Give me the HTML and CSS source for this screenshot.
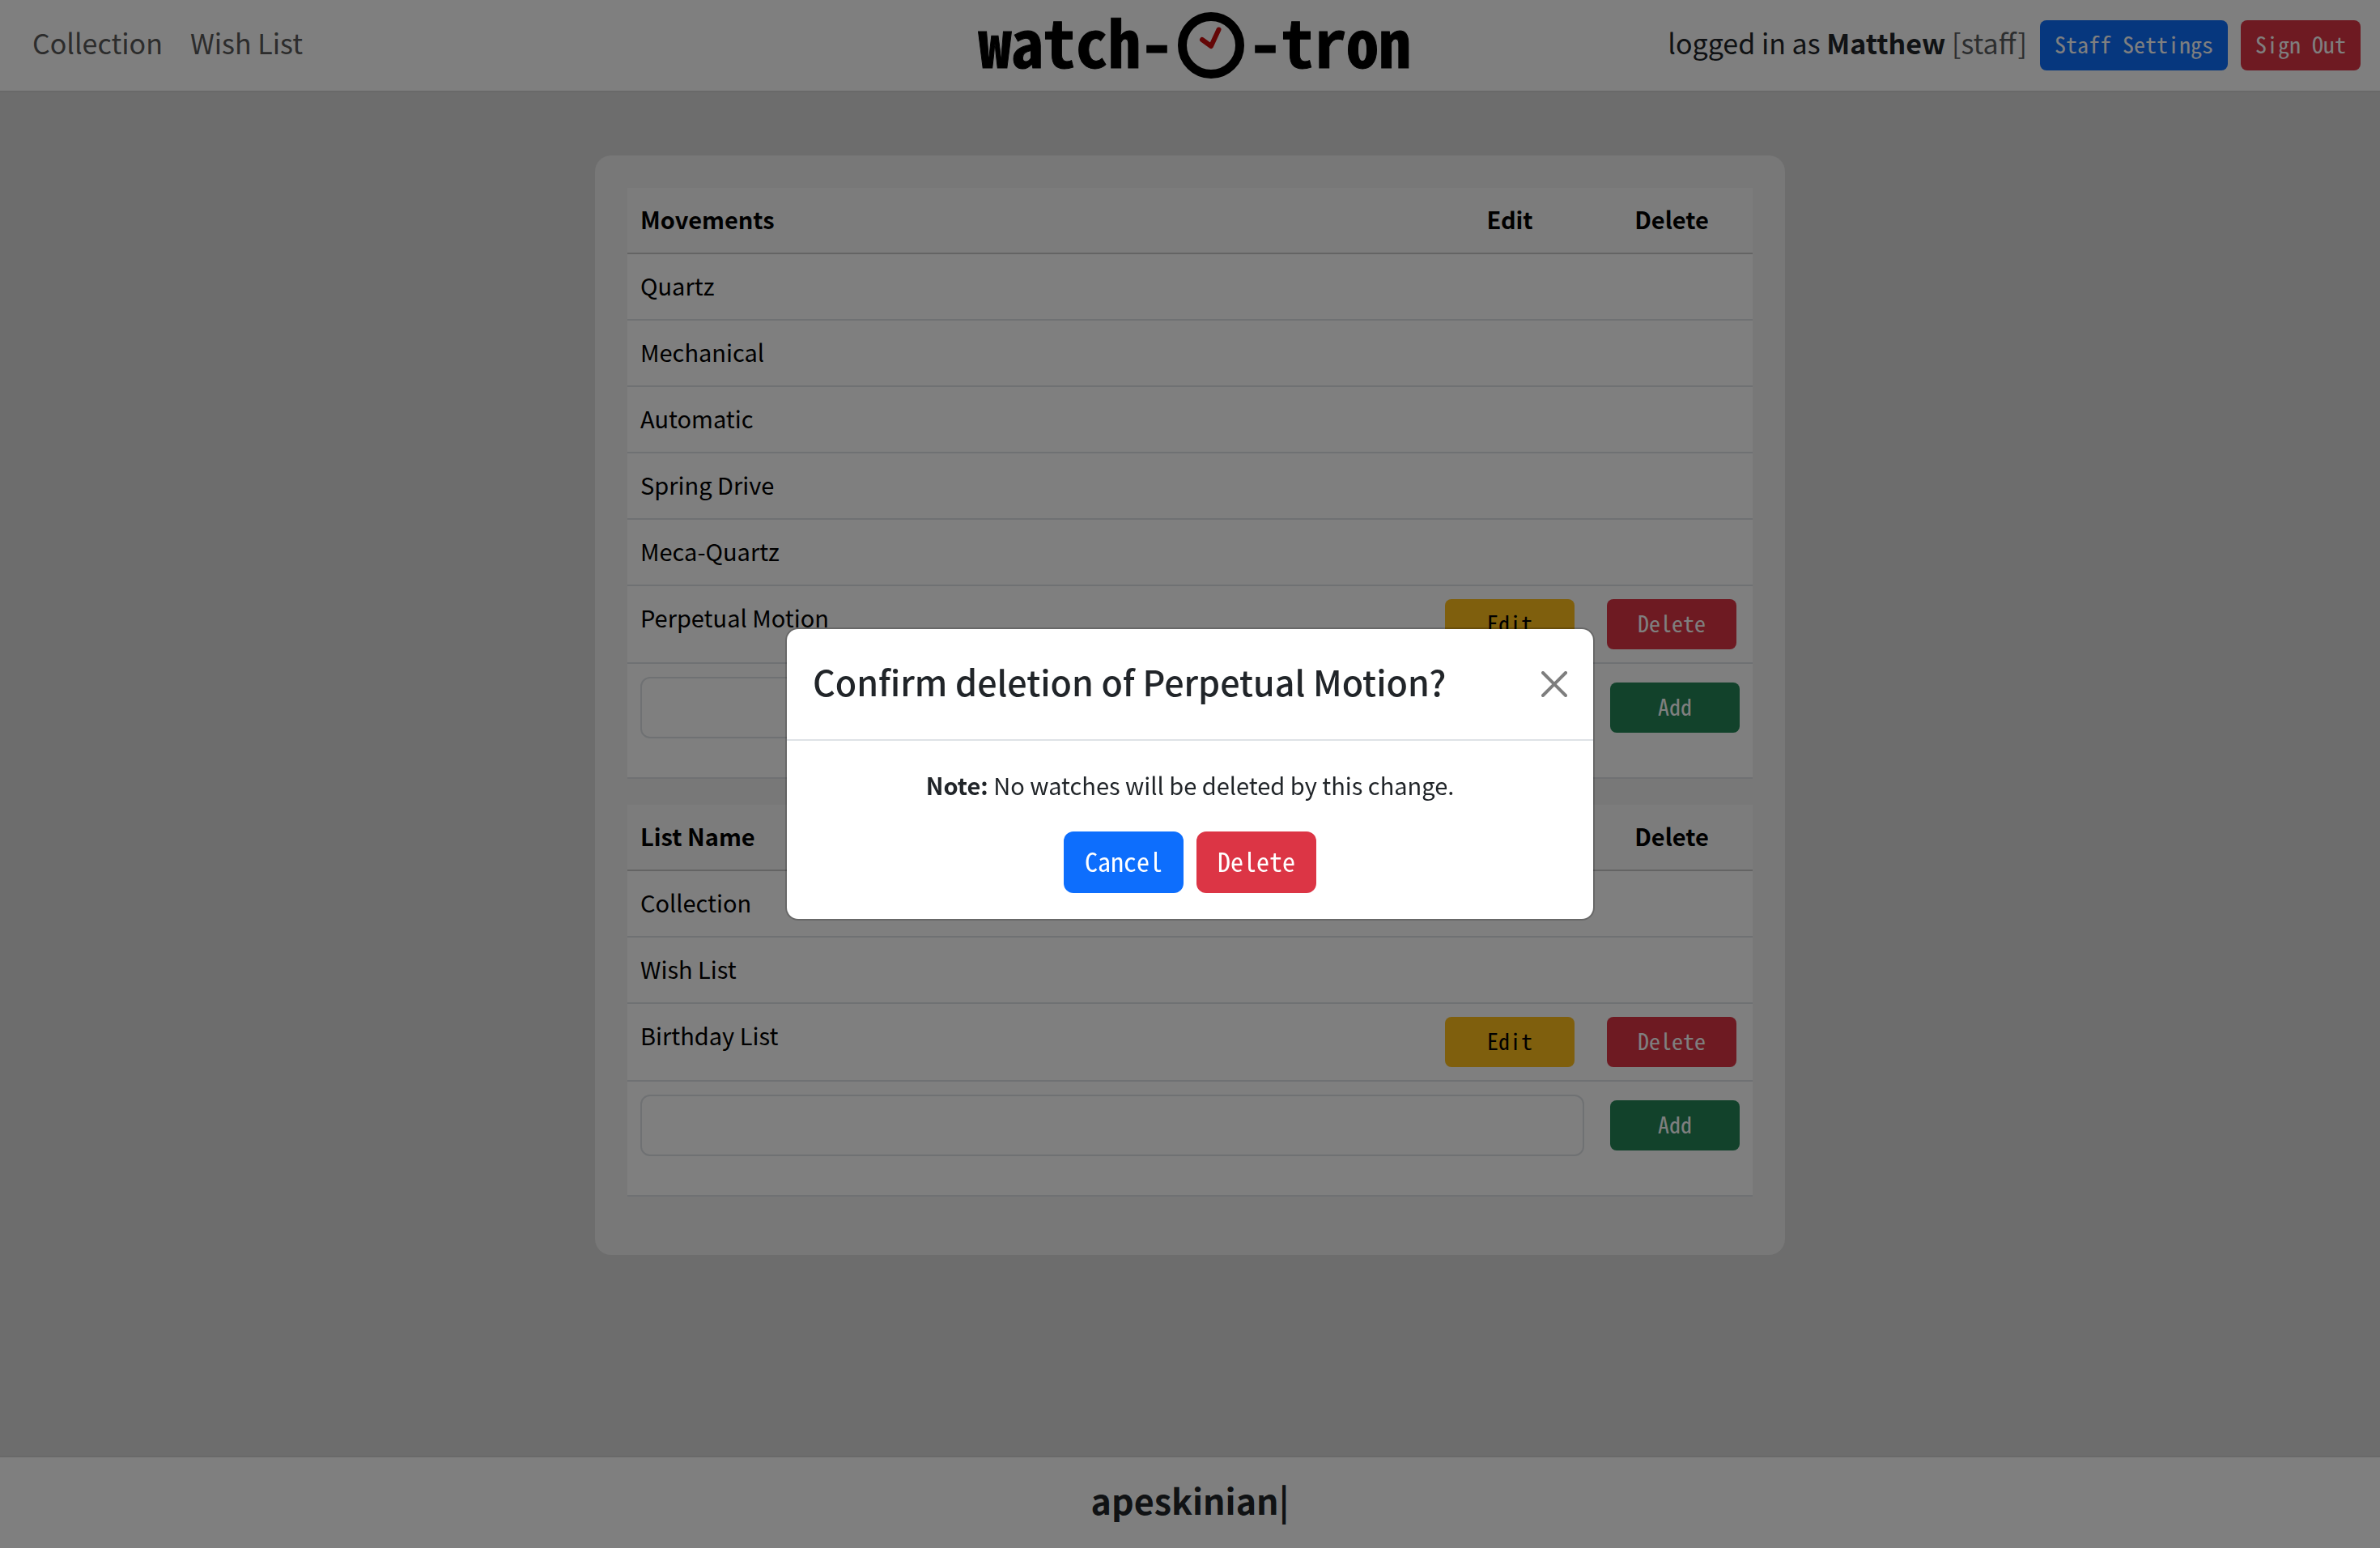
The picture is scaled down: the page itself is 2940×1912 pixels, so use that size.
FILE: index.html
```html
<!DOCTYPE html>
<html lang="en">
<head>
<meta charset="utf-8">
<title>watch-O-tron</title>
<link rel="stylesheet" href="styles.css">
</head>
<body>
<header class="navbar">
  <nav class="nav-links" aria-label="Main">
    <a class="nav-link" href="#collection">Collection</a>
    <a class="nav-link" href="#wish-list">Wish List</a>
  </nav>
  <a class="logo" href="#home" aria-label="watch-O-tron">
    <span class="logo-text">watch-</span>
    <svg class="logo-dial" viewBox="0 0 82 82" aria-hidden="true">
      <circle cx="41" cy="41" r="35.500" fill="none" stroke="#000" stroke-width="11"/>
      <path d="M30 34 41 42 50.500 21.500" fill="none" stroke="#c80f0f" stroke-width="6" stroke-linecap="round" stroke-linejoin="round"/>
    </svg>
    <span class="logo-text">-tron</span>
  </a>
  <div class="account">
    <span class="account-text">logged in as <strong>Matthew</strong> <span class="role">[staff]</span></span>
    <button class="btn btn-sm btn-primary" type="button">Staff Settings</button>
    <button class="btn btn-sm btn-danger" type="button">Sign Out</button>
  </div>
</header>

<main class="content">
  <section class="card">
    <table class="table">
      <thead>
        <tr><th scope="col">Movements</th><th class="action" scope="col">Edit</th><th class="action" scope="col">Delete</th></tr>
      </thead>
      <tbody>
        <tr><td>Quartz</td><td></td><td></td></tr>
        <tr><td>Mechanical</td><td></td><td></td></tr>
        <tr><td>Automatic</td><td></td><td></td></tr>
        <tr><td>Spring Drive</td><td></td><td></td></tr>
        <tr><td>Meca-Quartz</td><td></td><td></td></tr>
        <tr>
          <td>Perpetual Motion</td>
          <td class="action"><button class="btn btn-sm btn-row btn-warning" type="button">Edit</button></td>
          <td class="action"><button class="btn btn-sm btn-row btn-danger" type="button">Delete</button></td>
        </tr>
        <tr>
          <td colspan="3">
            <form class="add-form">
              <input class="text-input" type="text" aria-label="New movement">
              <button class="btn btn-sm btn-row btn-success" type="button">Add</button>
            </form>
          </td>
        </tr>
      </tbody>
    </table>

    <table class="table">
      <thead>
        <tr><th scope="col">List Name</th><th class="action" scope="col">Edit</th><th class="action" scope="col">Delete</th></tr>
      </thead>
      <tbody>
        <tr><td>Collection</td><td></td><td></td></tr>
        <tr><td>Wish List</td><td></td><td></td></tr>
        <tr>
          <td>Birthday List</td>
          <td class="action"><button class="btn btn-sm btn-row btn-warning" type="button">Edit</button></td>
          <td class="action"><button class="btn btn-sm btn-row btn-danger" type="button">Delete</button></td>
        </tr>
        <tr>
          <td colspan="3">
            <form class="add-form">
              <input class="text-input" type="text" aria-label="New list">
              <button class="btn btn-sm btn-row btn-success" type="button">Add</button>
            </form>
          </td>
        </tr>
      </tbody>
    </table>
  </section>
</main>

<footer class="footer"><strong>apeskinian|</strong></footer>

<div class="backdrop">
  <div class="modal" role="dialog" aria-modal="true" aria-labelledby="modal-title">
    <div class="modal-header">
      <h1 class="modal-title" id="modal-title">Confirm deletion of Perpetual Motion?</h1>
      <button class="close" type="button" aria-label="Close">
        <svg viewBox="0 0 16 16" aria-hidden="true"><path fill="#000" d="M.293.293a1 1 0 0 1 1.414 0L8 6.586 14.293.293a1 1 0 1 1 1.414 1.414L9.414 8l6.293 6.293a1 1 0 0 1-1.414 1.414L8 9.414l-6.293 6.293a1 1 0 0 1-1.414-1.414L6.586 8 .293 1.707a1 1 0 0 1 0-1.414z"/></svg>
      </button>
    </div>
    <div class="modal-body">
      <p class="note"><strong>Note:</strong> No watches will be deleted by this change.</p>
      <div class="modal-actions">
        <button class="btn btn-primary" type="button">Cancel</button>
        <button class="btn btn-danger" type="button">Delete</button>
      </div>
    </div>
  </div>
</div>
</body>
</html>
```
FILE: styles.css
```css
:root {
  --sans: "Noto Sans CJK JP", "Noto Sans", sans-serif;
  --mono: "Noto Sans Mono CJK JP", "Liberation Mono", monospace;
}

* {
  box-sizing: border-box;
}

body {
  margin: 0;
  min-height: 100vh;
  display: flex;
  flex-direction: column;
  background: #dbdbdb;
  color: #212529;
  font: 29px/44px var(--sans);
}

.navbar {
  display: grid;
  grid-template-columns: 1fr auto 1fr;
  align-items: center;
  height: 114px;
  padding: 0 24px;
  background: #fff;
  border-bottom: 2px solid #d2d2d2;
}

.nav-links {
  display: flex;
  gap: 34px;
  padding: 0 0 6px 16px;
}

.nav-link {
  color: #595959;
  font-size: 34px;
  text-decoration: none;
}

.logo {
  display: flex;
  align-items: center;
  gap: 6px;
  padding-left: 12px;
  color: #000;
  font: 700 80px/84px var(--mono);
  text-decoration: none;
}

.logo-text {
  padding-bottom: 14px;
  -webkit-text-stroke: 1px #000;
}

.logo-dial {
  width: 82px;
  height: 82px;
}

.account {
  display: flex;
  justify-content: flex-end;
  align-items: center;
  gap: 16px;
}

.account-text {
  padding-bottom: 6px;
  font-size: 34px;
}

.role {
  color: #595c5f;
}

.btn {
  height: 76px;
  padding: 0 26px 4px;
  border: 0;
  border-radius: 12px;
  color: #fff;
  font: 500 32px/48px var(--mono);
}

.btn-sm {
  height: 62px;
  padding: 0 18px 4px;
  border-radius: 8px;
  font-size: 28px;
}

.btn-row {
  width: 160px;
}

.btn-primary { background: #0d6efd; }
.btn-danger { background: #dc3545; }
.btn-warning { background: #ffbe1a; color: #000; }
.btn-success { background: #248556; }

.content {
  flex: 1;
  padding: 78px 0;
}

.card {
  width: 50%;
  margin: 0 auto;
  padding: 40px;
  border-radius: 20px;
  background: #f0f0f0;
}

.table {
  width: 100%;
  margin-bottom: 32px;
  border-collapse: separate;
  border-spacing: 0;
  background: #fff;
  color: #000;
}

.table th,
.table td {
  height: 82px;
  padding: 16px;
  border-bottom: 2px solid #dee2e6;
  text-align: left;
  vertical-align: top;
}

.table th {
  background: #f8f8f8;
  border-bottom-color: #c8c8c8;
}

.table .action {
  width: 200px;
  text-align: center;
}

.action .btn {
  display: block;
  margin: 0 auto;
}

.add-form {
  display: flex;
  align-items: center;
  gap: 32px;
  margin-bottom: 32px;
}

.text-input {
  flex: 1;
  height: 76px;
  padding: 12px 24px;
  border: 2px solid #dee2e6;
  border-radius: 12px;
  background: #fff;
  font: inherit;
}

.footer {
  height: 114px;
  border-top: 2px solid #d2d2d2;
  background: #fff;
  font-size: 43px;
  line-height: 104px;
  text-align: center;
}

.backdrop {
  position: fixed;
  inset: 0;
  display: flex;
  align-items: center;
  justify-content: center;
  background: rgb(0 0 0 / 50%);
}

.modal {
  width: 1000px;
  border: 2px solid rgb(0 0 0 / 18%);
  border-radius: 16px;
  background: #fff;
  background-clip: padding-box;
}

.modal-header {
  display: flex;
  align-items: center;
  justify-content: space-between;
  padding: 32px;
  border-bottom: 2px solid #dee2e6;
}

.modal-title {
  margin: 0;
  padding-bottom: 8px;
  font-size: 43px;
  font-weight: 500;
  line-height: 64px;
}

.close {
  display: block;
  width: 32px;
  height: 32px;
  padding: 0;
  border: 0;
  background: none;
  opacity: 0.5;
}

.close svg {
  display: block;
}

.modal-body {
  padding: 32px;
  text-align: center;
}

.note {
  margin: 0 0 36px;
}

.modal-actions {
  display: flex;
  justify-content: center;
  gap: 16px;
}
```
